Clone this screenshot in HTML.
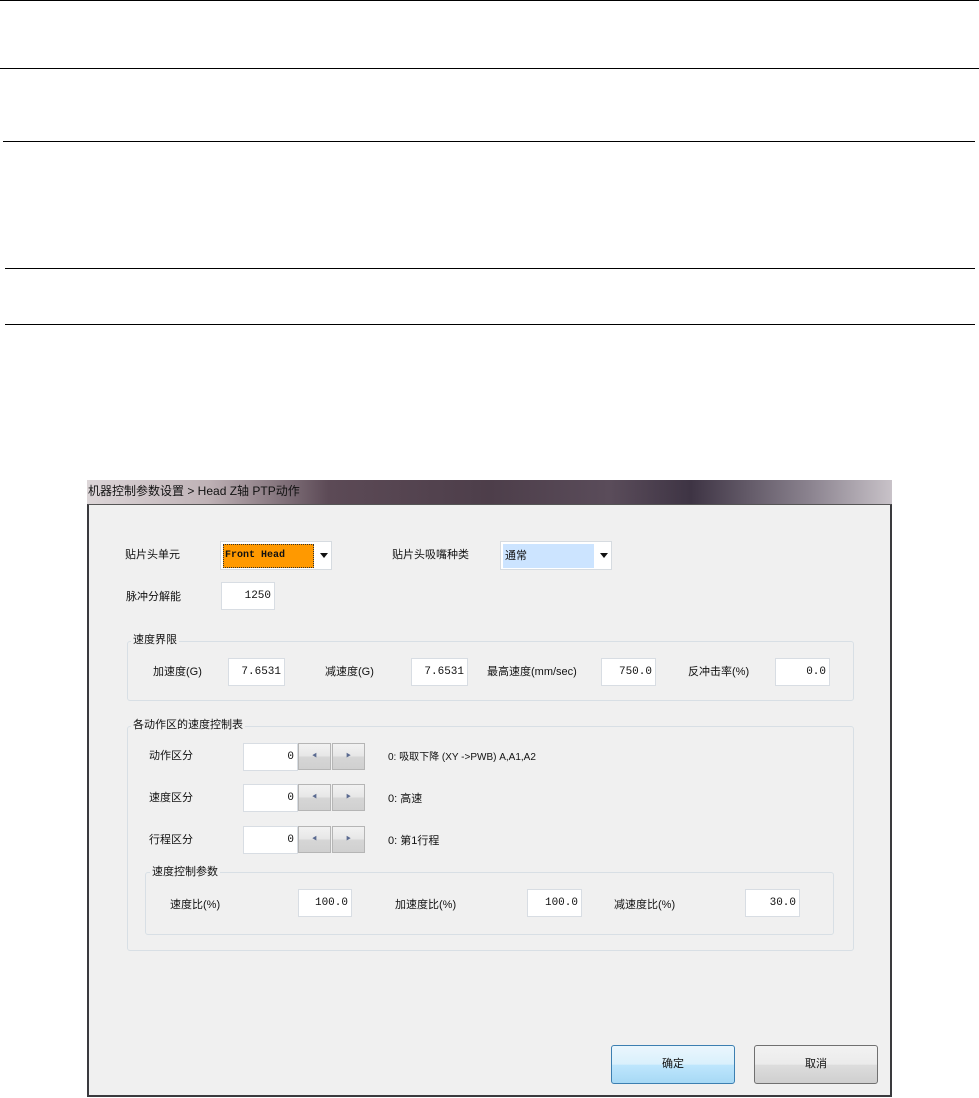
<!DOCTYPE html>
<html><head><meta charset="utf-8"><style>
*{margin:0;padding:0;box-sizing:border-box}
body{width:979px;height:1098px;background:#fff;position:relative;overflow:hidden;font-family:"Liberation Sans","Noto Sans CJK SC",sans-serif;font-size:11px;color:#111}
.a{position:absolute}
.hl{position:absolute;height:1px;background:#000}
.t{position:absolute;line-height:14px;white-space:nowrap}
.in{position:absolute;background:#fff;border:1px solid #d8dde3;text-align:right;padding-right:3px;font-family:"Liberation Mono","Noto Sans CJK SC",monospace;font-size:11px;}
.grp{position:absolute;border:1px solid #d8dfe5;border-radius:3px}
.gl{position:absolute;background:#f0f0f0;padding:0 2px;line-height:14px}
.sb{position:absolute;width:33px;height:27px;border:1px solid #b5b5b5;background:linear-gradient(#f2f2f2,#e6e6e6 50%,#d6d6d6 51%,#d0d0d0);font-size:5px;color:#5a6a90;text-align:center;line-height:25px}
.cb{position:absolute;background:#fff;border:1px solid #d6dbe0}
.arrow{position:absolute;width:0;height:0;border-left:4px solid transparent;border-right:4px solid transparent;border-top:5px solid #111}
</style></head><body>
<div class="hl" style="left:0;top:0;width:979px"></div>
<div class="hl" style="left:0;top:68px;width:979px"></div>
<div class="hl" style="left:3px;top:141px;width:972px"></div>
<div class="hl" style="left:5px;top:268px;width:970px"></div>
<div class="hl" style="left:5px;top:324px;width:970px"></div>

<div class="a" style="left:87px;top:480px;width:805px;height:24px;background:linear-gradient(90deg,#ddd6d8 0,#bfb2b6 15%,#5c4a56 30%,#4d3e4a 50%,#5a4c5a 65%,#3e3444 75%,#8c8490 90%,#c8c2c8 100%)"></div>
<div class="t" style="left:88px;top:484px;font-size:12px;color:#111">机器控制参数设置 &gt; Head Z轴 PTP动作</div>
<div class="a" style="left:87px;top:504px;width:805px;height:593px;background:#f0f0f0;border:2px solid #3a3a3e;border-top:1px solid #555"></div>

<div class="t" style="left:125px;top:548px">贴片头单元</div>
<div class="cb" style="left:220px;top:541px;width:112px;height:29px"></div>
<div class="a" style="left:223px;top:544px;width:91px;height:24px;background:#ff9900;border:1px dotted #333"></div>
<div class="t" style="left:225px;top:549px;font-family:'Liberation Mono',monospace;font-weight:bold;font-size:10px">Front Head</div>
<div class="arrow" style="left:320px;top:553px"></div>

<div class="t" style="left:392px;top:548px">贴片头吸嘴种类</div>
<div class="cb" style="left:500px;top:541px;width:112px;height:29px"></div>
<div class="a" style="left:503px;top:544px;width:91px;height:24px;background:#cce4ff"></div>
<div class="t" style="left:505px;top:549px">通常</div>
<div class="arrow" style="left:600px;top:553px"></div>

<div class="t" style="left:126px;top:590px">脉冲分解能</div>
<div class="in" style="left:221px;top:582px;width:54px;height:28px;line-height:26px">1250</div>

<div class="grp" style="left:127px;top:641px;width:727px;height:60px"></div>
<div class="gl" style="left:131px;top:633px">速度界限</div>
<div class="t" style="left:153px;top:665px">加速度(G)</div>
<div class="in" style="left:228px;top:658px;width:57px;height:28px;line-height:26px">7.6531</div>
<div class="t" style="left:325px;top:665px">减速度(G)</div>
<div class="in" style="left:411px;top:658px;width:57px;height:28px;line-height:26px">7.6531</div>
<div class="t" style="left:487px;top:665px">最高速度(mm/sec)</div>
<div class="in" style="left:601px;top:658px;width:55px;height:28px;line-height:26px">750.0</div>
<div class="t" style="left:688px;top:665px">反冲击率(%)</div>
<div class="in" style="left:775px;top:658px;width:55px;height:28px;line-height:26px">0.0</div>

<div class="grp" style="left:127px;top:726px;width:727px;height:225px"></div>
<div class="gl" style="left:131px;top:718px">各动作区的速度控制表</div>

<div class="t" style="left:149px;top:749px">动作区分</div>
<div class="in" style="left:243px;top:743px;width:55px;height:28px;line-height:26px">0</div>
<div class="sb" style="left:298px;top:743px">◀</div><div class="sb" style="left:332px;top:743px">▶</div>
<div class="t" style="left:388px;top:751px;font-size:10px">0: 吸取下降 (XY -&gt;PWB) A,A1,A2</div>

<div class="t" style="left:149px;top:791px">速度区分</div>
<div class="in" style="left:243px;top:784px;width:55px;height:28px;line-height:26px">0</div>
<div class="sb" style="left:298px;top:784px">◀</div><div class="sb" style="left:332px;top:784px">▶</div>
<div class="t" style="left:388px;top:792px">0: 高速</div>

<div class="t" style="left:149px;top:833px">行程区分</div>
<div class="in" style="left:243px;top:826px;width:55px;height:28px;line-height:26px">0</div>
<div class="sb" style="left:298px;top:826px">◀</div><div class="sb" style="left:332px;top:826px">▶</div>
<div class="t" style="left:388px;top:834px">0: 第1行程</div>

<div class="grp" style="left:145px;top:872px;width:689px;height:63px"></div>
<div class="gl" style="left:150px;top:865px">速度控制参数</div>
<div class="t" style="left:170px;top:898px">速度比(%)</div>
<div class="in" style="left:298px;top:889px;width:54px;height:28px;line-height:26px">100.0</div>
<div class="t" style="left:395px;top:898px">加速度比(%)</div>
<div class="in" style="left:527px;top:889px;width:55px;height:28px;line-height:26px">100.0</div>
<div class="t" style="left:614px;top:898px">减速度比(%)</div>
<div class="in" style="left:745px;top:889px;width:55px;height:28px;line-height:26px">30.0</div>

<div class="a" style="left:611px;top:1045px;width:124px;height:39px;border:1px solid #3c7fb1;border-radius:3px;background:linear-gradient(#eaf6fd,#d9f0fc 50%,#bee6fd 51%,#a7d9f5);text-align:center;line-height:37px">确定</div>
<div class="a" style="left:754px;top:1045px;width:124px;height:39px;border:1px solid #707070;border-radius:3px;background:linear-gradient(#f2f2f2,#ebebeb 50%,#dddddd 51%,#cfcfcf);text-align:center;line-height:37px">取消</div>
</body></html>
